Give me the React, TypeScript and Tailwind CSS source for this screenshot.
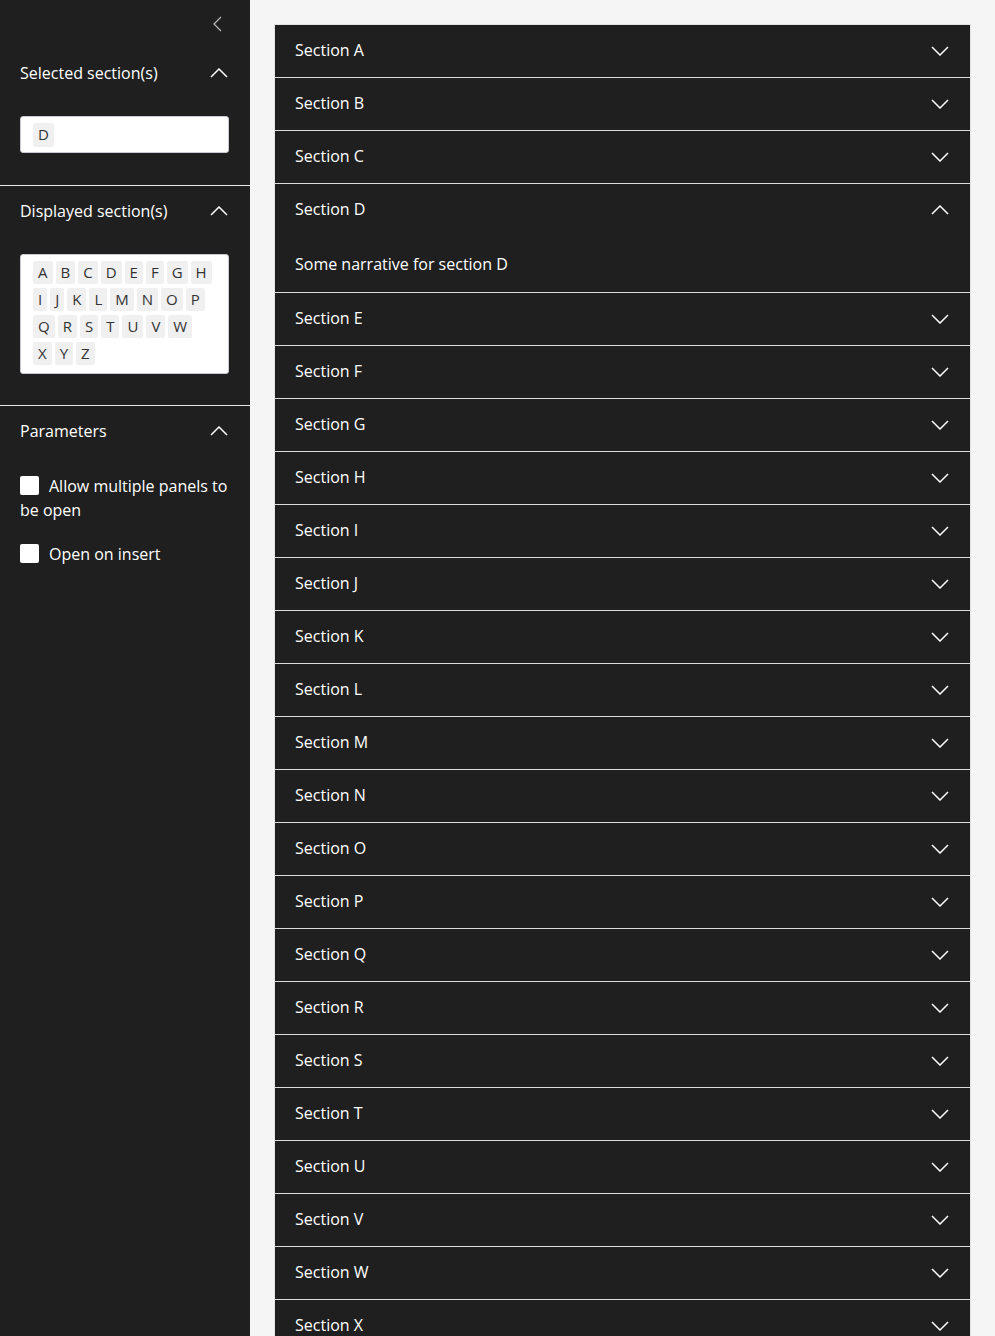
import React from "react";

const font = { fontFamily: '"Open Sans", "Noto Sans", sans-serif' };

function ChevronDown() {
  return (
    <svg width="18" height="10" viewBox="0 0 18 10" fill="none" className="shrink-0">
      <polyline points="1,1 9,9 17,1" stroke="#ffffff" strokeWidth="1.5" strokeLinejoin="miter" />
    </svg>
  );
}

function ChevronUp() {
  return (
    <svg width="18" height="10" viewBox="0 0 18 10" fill="none" className="shrink-0">
      <polyline points="1,9 9,1 17,9" stroke="#ffffff" strokeWidth="1.5" strokeLinejoin="miter" />
    </svg>
  );
}

function ChevronLeft() {
  return (
    <svg width="9" height="16" viewBox="0 0 9 16" fill="none">
      <polyline points="8,1 1,8 8,15" stroke="#b5b5b5" strokeWidth="1.3" />
    </svg>
  );
}

function Chip({ l }: { l: string }) {
  return (
    <span className="inline-flex h-[23px] items-center justify-center rounded-[2px] bg-[#f0f0f0] px-[5px] text-[15px] leading-none text-[#333333]">
      {l}
    </span>
  );
}

function SideHeader({ title }: { title: string }) {
  return (
    <div className="flex h-[50px] items-center justify-between pr-[2px]">
      <span className="text-[16px] text-white">{title}</span>
      <ChevronUp />
    </div>
  );
}

const rows = [
  ["A", "B", "C", "D", "E", "F", "G", "H"],
  ["I", "J", "K", "L", "M", "N", "O", "P"],
  ["Q", "R", "S", "T", "U", "V", "W"],
  ["X", "Y", "Z"],
];

const letters = "ABCDEFGHIJKLMNOPQRSTUVWXYZ".split("");

export default function App() {
  return (
    <div className="flex min-h-screen w-full bg-[#f5f5f5]" style={font}>
      <aside className="flex w-[250px] shrink-0 flex-col bg-[#1f1f1f]">
        <div className="flex h-[48px] items-center justify-end pr-[28px]">
          <ChevronLeft />
        </div>
        <div className="border-b border-[#e6e6e6] px-5 pb-[32px]">
          <SideHeader title="Selected section(s)" />
          <div className="mt-[18px] flex h-[37px] w-[209px] items-center rounded-[3px] border border-[#c8ccd2] bg-white pl-[12px]">
            <span className="inline-flex h-[24px] w-[21px] items-center justify-center rounded-[2px] bg-[#f0f0f0] text-[15px] text-[#333333]">
              D
            </span>
          </div>
        </div>
        <div className="border-b border-[#e6e6e6] px-5 pb-[31px]">
          <SideHeader title="Displayed section(s)" />
          <div className="mt-[18px] flex w-[209px] flex-col gap-[4px] rounded-[3px] border border-[#c8ccd2] bg-white pb-[8px] pl-[12px] pt-[6px]">
            {rows.map((r, i) => (
              <div key={i} className="flex gap-[3px]">
                {r.map((l) => (
                  <Chip key={l} l={l} />
                ))}
              </div>
            ))}
          </div>
        </div>
        <div className="px-5">
          <SideHeader title="Parameters" />
          <div className="mt-[18px] text-[16px] leading-[24px] text-white">
            <span className="mr-[10px] inline-block h-[19px] w-[19px] rounded-[2px] bg-white align-[-3px]" />
            Allow multiple panels to be open
          </div>
          <div className="mt-[20px] text-[16px] leading-[24px] text-white">
            <span className="mr-[10px] inline-block h-[19px] w-[19px] rounded-[2px] bg-white align-[-3px]" />
            Open on insert
          </div>
        </div>
      </aside>
      <main className="min-w-0 flex-1 px-[24px] pt-[24px]">
        <div className="border border-[#e3e3e3] bg-[#1f1f1f]">
          {letters.map((l, i) => (
            <div key={l} className={i > 0 ? "border-t border-[#dcdcdc]" : ""}>
              <div className="flex h-[52px] items-center justify-between pl-[20px] pr-[21px]">
                <span className="mb-[2px] text-[16px] text-white">Section {l}</span>
                {l === "D" ? <ChevronUp /> : <ChevronDown />}
              </div>
              {l === "D" && (
                <div className="flex h-[56px] items-center pl-[20px] text-[16px] text-white">
                  Some narrative for section D
                </div>
              )}
            </div>
          ))}
        </div>
      </main>
    </div>
  );
}
